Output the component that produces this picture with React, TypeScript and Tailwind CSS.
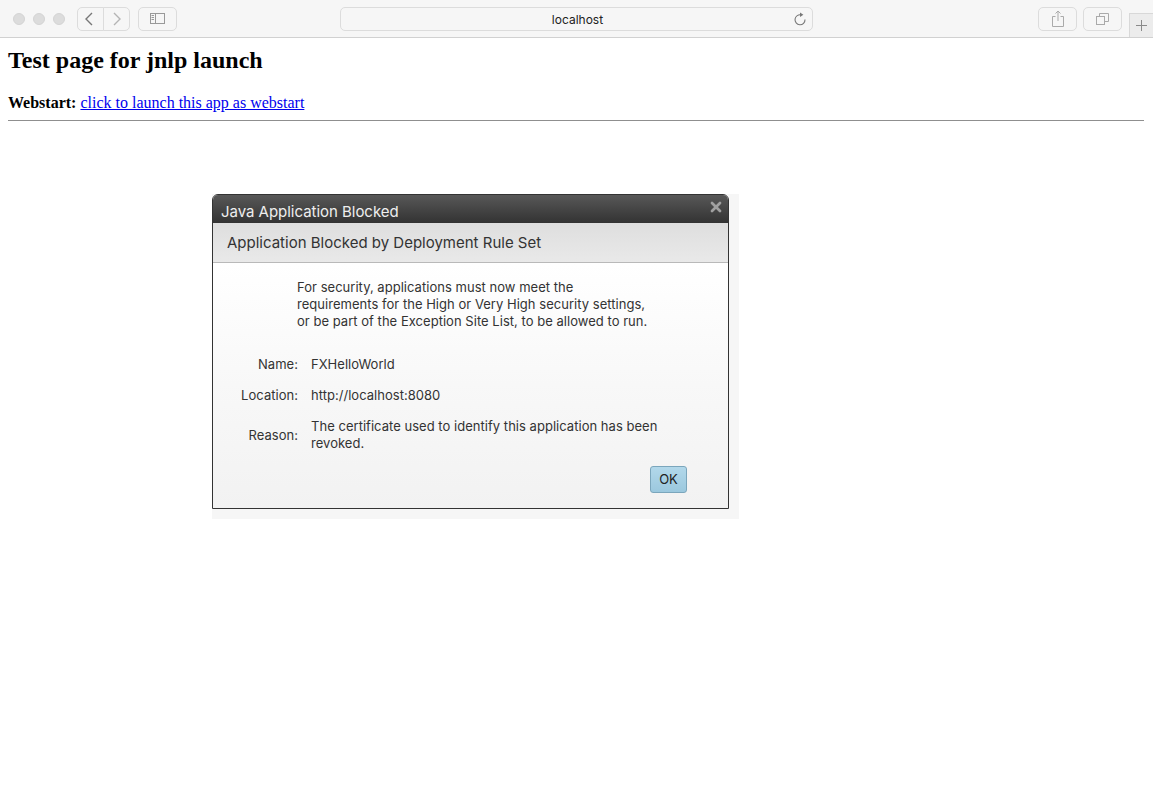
import { X } from 'lucide-react';

function ToolButton({ className, children }: { className: string; children?: React.ReactNode }) {
  return (
    <div className={`h-6 flex items-center justify-center border border-[#dcdcdc] rounded-[5px] bg-[#f6f6f6] ${className}`}>
      {children}
    </div>
  );
}

function Toolbar() {
  return (
    <header className="h-[38px] shrink-0 flex bg-[#f6f6f6] border-b border-[#d1d1d1] font-['Inter',sans-serif]">
      <div className="flex items-center gap-2 ml-[13px] mt-px">
        <span className="w-3 h-3 rounded-full bg-[#dcdcdc] border border-[#d4d4d4]" />
        <span className="w-3 h-3 rounded-full bg-[#dcdcdc] border border-[#d4d4d4]" />
        <span className="w-3 h-3 rounded-full bg-[#dcdcdc] border border-[#d4d4d4]" />
      </div>
      <div className="flex items-center ml-3">
        <ToolButton className="w-[27px] rounded-r-none">
          <svg className="-ml-[3px]" width="10" height="14" viewBox="0 0 10 14" fill="none" stroke="#777" strokeWidth="1.4">
            <path d="M8 1 L2 7 L8 13" />
          </svg>
        </ToolButton>
        <ToolButton className="w-[27px] rounded-l-none -ml-px">
          <svg width="10" height="14" viewBox="0 0 10 14" fill="none" stroke="#b4b4b4" strokeWidth="1.4">
            <path d="M2 1 L8 7 L2 13" />
          </svg>
        </ToolButton>
      </div>
      <div className="flex items-center ml-2">
        <ToolButton className="w-[39px]">
          <svg width="15" height="11" viewBox="0 0 15 11" fill="none" stroke="#999">
            <rect x="0.5" y="0.5" width="14" height="10" />
            <path d="M5.5 0.5 V10.5 M1.5 2.5 H4 M1.5 4.5 H4 M1.5 6.5 H4" />
          </svg>
        </ToolButton>
      </div>
      <div className="flex items-center ml-[163px]">
        <div className="w-[473px] h-6 relative flex items-center justify-center border border-[#dcdcdc] rounded-[5px] bg-[#f6f6f6] text-[12px] text-[#222] pt-[2px] pl-[2px]">
          localhost
          <svg className="absolute right-[5px] top-[4px]" width="14" height="14" viewBox="0 0 14 14" fill="none" stroke="#777" strokeWidth="1.1">
            <path d="M8.2 2.9 A5 5 0 1 0 12 7.5" />
            <path d="M7 0.4 L10.4 2.8 L7 5 Z" fill="#777" stroke="none" />
          </svg>
        </div>
      </div>
      <div className="flex items-center ml-[225px]">
        <ToolButton className="w-[39px]">
          <svg width="12" height="17" viewBox="0 0 12 17" fill="none" stroke="#aaa">
            <path d="M3.5 6.5 H0.5 V16.5 H11.5 V6.5 H8.5" />
            <path d="M6 11 V1 M3.5 3.5 L6 1 L8.5 3.5" />
          </svg>
        </ToolButton>
      </div>
      <div className="flex items-center ml-[6px]">
        <ToolButton className="w-[39px]">
          <svg width="13" height="12" viewBox="0 0 13 12" fill="none" stroke="#aaa">
            <rect x="0.5" y="3.5" width="8" height="8" />
            <path d="M3.5 3 V0.5 H12.5 V8.5 H9" />
          </svg>
        </ToolButton>
      </div>
      <div className="ml-[7px] mt-[13px] w-6 h-6 flex items-center justify-center bg-[#ececec] border-l border-t border-[#d8d8d8]">
        <svg width="11" height="11" viewBox="0 0 11 11" stroke="#8a8a8a">
          <path d="M5.5 0 V11 M0 5.5 H11" />
        </svg>
      </div>
    </header>
  );
}

function InfoRow({ label, className, children }: { label: string; className: string; children: React.ReactNode }) {
  return (
    <div className={`flex items-center ${className}`}>
      <div className="w-[85px] text-right">{label}</div>
      <div className="ml-[13px] w-[360px]">{children}</div>
    </div>
  );
}

function Dialog() {
  return (
    <div className="ml-[204px] mt-[73px] w-[527px] h-[325px] bg-[#f6f6f6] font-['Inter',sans-serif]">
      <div className="w-[517px] h-[315px] flex flex-col border border-[#333] rounded-t-[6px] overflow-hidden">
        <div className="h-[28px] shrink-0 flex justify-between bg-gradient-to-b from-[#585858] to-[#333] text-[#eee] text-[15px] pl-2">
          <span className="mt-[8px] leading-[18px] tracking-[-0.03px]">Java Application Blocked</span>
          <X className="mr-[4px] mt-[4px] text-[#a0a0a0]" size={16} strokeWidth={4} />
        </div>
        <div className="h-[40px] shrink-0 flex items-center pl-[14px] pt-[2px] bg-gradient-to-b from-[#dedede] to-[#e9e9e9] border-b border-[#b9b9b9] text-[15px] text-[#333]">
          Application Blocked by Deployment Rule Set
        </div>
        <div className="flex-1 flex flex-col bg-gradient-to-b from-white via-[#f8f8f8] to-[#f2f2f2] text-[13px] leading-[17px] tracking-[0.03px] text-[#333]">
          <div className="ml-[84px] mt-[16px]">
            <div>For security, applications must now meet the</div>
            <div>requirements for the High or Very High security settings,</div>
            <div>or be part of the Exception Site List, to be allowed to run.</div>
          </div>
          <InfoRow label="Name:" className="mt-[26px]">FXHelloWorld</InfoRow>
          <InfoRow label="Location:" className="mt-[14px]">http://localhost:8080</InfoRow>
          <InfoRow label="Reason:" className="mt-[14px]">
            The certificate used to identify this application has been revoked.
          </InfoRow>
          <div className="flex justify-end mr-[41px] mt-[14px]">
            <button className="w-[37px] h-[27px] rounded-[3px] border border-[#7ba6bc] bg-gradient-to-b from-[#b2d8ea] to-[#9bc8de] text-[#222]">
              OK
            </button>
          </div>
        </div>
      </div>
    </div>
  );
}

export default function App() {
  return (
    <div className="h-[785px] flex flex-col overflow-hidden bg-white">
      <Toolbar />
      <main className="flex-1 pl-2 pr-[9px] py-2 font-['Liberation_Serif',serif] text-[16px] text-black">
        <h1 className="text-[24px] leading-[27px] font-bold mt-[1px]">Test page for jnlp launch</h1>
        <p className="mt-[20px] leading-[18px]">
          <b>Webstart:</b> <a className="text-[#0000ee] underline">click to launch this app as webstart</a>
        </p>
        <hr className="mt-[8px] border-t border-[#8f8f8f]" />
        <Dialog />
      </main>
    </div>
  );
}
